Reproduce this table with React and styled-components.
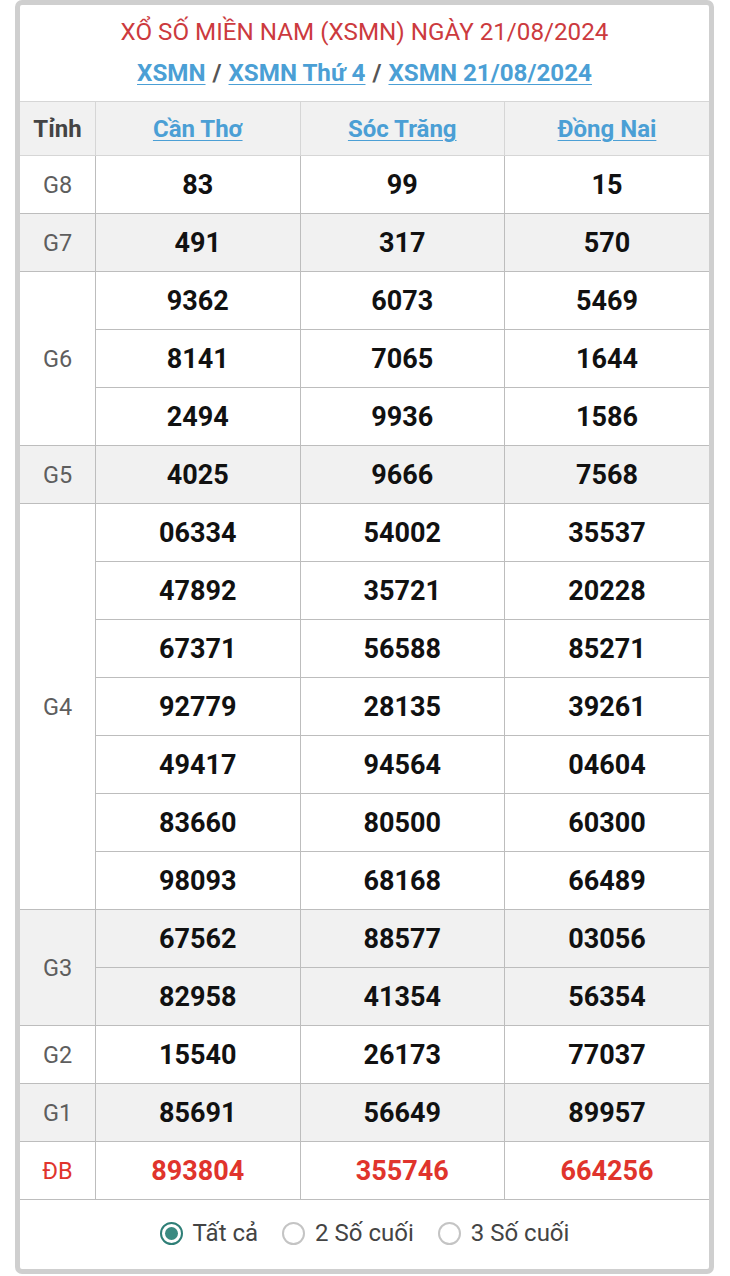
import React from "react";
import styled, { createGlobalStyle } from "styled-components";

const Global = createGlobalStyle`
  html, body { margin: 0; padding: 0; background: #fff; }
  body { font-family: Roboto, "Noto Sans", Arial, sans-serif; }
`;

const Card = styled.div`
  box-sizing: border-box;
  width: 699px;
  margin-left: 15px;
  border: 5px solid #cfcfcf;
  border-radius: 7px;
  background: #fff;
  overflow: hidden;
`;

const Head = styled.div`
  height: 96px;
  display: flex;
  flex-direction: column;
  align-items: center;
  justify-content: flex-start;
  padding-top: 13px;
  box-sizing: border-box;
`;

const Title = styled.h1`
  margin: 0;
  font-size: 24.2px;
  font-weight: 400;
  color: #cc3a3e;
  line-height: 28px;
`;

const Crumbs = styled.div`
  margin-top: 13px;
  font-size: 24.2px;
  font-weight: 700;
  color: #555;
  line-height: 28px;
  display: flex;
  gap: 7px;
`;

const Link = styled.a`
  color: #4b9fd5;
  text-decoration: underline;
  text-underline-offset: 3px;
  text-decoration-thickness: 1px;
`;

const Table = styled.table`
  width: 100%;
  border-collapse: collapse;
  table-layout: fixed;
`;

const Row = styled.tr`
  background: ${(p) => (p.$shade ? "#f1f1f1" : "#fff")};
`;

const HeadCell = styled.th`
  height: 53px;
  border: 1px solid #d6d6d6;
  font-size: 24px;
  font-weight: 700;
  color: ${(p) => (p.$plain ? "#444" : "#4b9fd5")};
  text-align: center;
  padding: 0;
  &:first-child { border-left: none; }
  &:last-child { border-right: none; }
`;

const Label = styled.td`
  width: 75px;
  border: 1px solid #bdbdbd;
  border-left: none;
  text-align: center;
  font-size: 23.5px;
  color: ${(p) => (p.$red ? "#e0342c" : "#5e5e5e")};
  padding: 0;
`;

const Num = styled.td`
  height: 57px;
  border: 1px solid #bdbdbd;
  text-align: center;
  font-size: 27px;
  font-weight: 700;
  color: ${(p) => (p.$red ? "#e0342c" : "#111")};
  padding: 0;
  &:last-child { border-right: none; }
`;

const Footer = styled.div`
  height: 69px;
  display: flex;
  align-items: center;
  justify-content: center;
  gap: 24px;
  padding-bottom: 3px;
  box-sizing: border-box;
`;

const Option = styled.label`
  display: flex;
  align-items: center;
  gap: 10px;
  font-size: 24px;
  color: #444;
`;

const Radio = styled.span`
  box-sizing: border-box;
  width: 23px;
  height: 23px;
  border-radius: 50%;
  border: 2px solid ${(p) => (p.$on ? "#2f7f77" : "#c4c4c4")};
  display: flex;
  align-items: center;
  justify-content: center;
  &::after {
    content: "";
    width: 13px;
    height: 13px;
    border-radius: 50%;
    background: ${(p) => (p.$on ? "#3a8a81" : "transparent")};
  }
`;

const prizes = [
  { g: "G8", rows: [["83", "99", "15"]] },
  { g: "G7", rows: [["491", "317", "570"]] },
  { g: "G6", rows: [["9362", "6073", "5469"], ["8141", "7065", "1644"], ["2494", "9936", "1586"]] },
  { g: "G5", rows: [["4025", "9666", "7568"]] },
  {
    g: "G4",
    rows: [
      ["06334", "54002", "35537"],
      ["47892", "35721", "20228"],
      ["67371", "56588", "85271"],
      ["92779", "28135", "39261"],
      ["49417", "94564", "04604"],
      ["83660", "80500", "60300"],
      ["98093", "68168", "66489"],
    ],
  },
  { g: "G3", rows: [["67562", "88577", "03056"], ["82958", "41354", "56354"]] },
  { g: "G2", rows: [["15540", "26173", "77037"]] },
  { g: "G1", rows: [["85691", "56649", "89957"]] },
  { g: "ĐB", rows: [["893804", "355746", "664256"]], red: true },
];

export default function App() {
  return (
    <>
      <Global />
      <Card>
        <Head>
          <Title>XỔ SỐ MIỀN NAM (XSMN) NGÀY 21/08/2024</Title>
          <Crumbs>
            <Link>XSMN</Link>/<Link>XSMN Thứ 4</Link>/<Link>XSMN 21/08/2024</Link>
          </Crumbs>
        </Head>
        <Table>
          <thead>
            <Row $shade>
              <HeadCell $plain style={{ width: 75 }}>Tỉnh</HeadCell>
              <HeadCell><Link>Cần Thơ</Link></HeadCell>
              <HeadCell><Link>Sóc Trăng</Link></HeadCell>
              <HeadCell><Link>Đồng Nai</Link></HeadCell>
            </Row>
          </thead>
          <tbody>
            {prizes.map((p, i) =>
              p.rows.map((r, j) => (
                <Row key={p.g + j} $shade={i % 2 === 1}>
                  {j === 0 && (
                    <Label rowSpan={p.rows.length} $red={p.red}>
                      {p.g}
                    </Label>
                  )}
                  {r.map((n, k) => (
                    <Num key={k} $red={p.red}>{n}</Num>
                  ))}
                </Row>
              ))
            )}
          </tbody>
        </Table>
        <Footer>
          <Option><Radio $on />Tất cả</Option>
          <Option><Radio />2 Số cuối</Option>
          <Option><Radio />3 Số cuối</Option>
        </Footer>
      </Card>
    </>
  );
}
